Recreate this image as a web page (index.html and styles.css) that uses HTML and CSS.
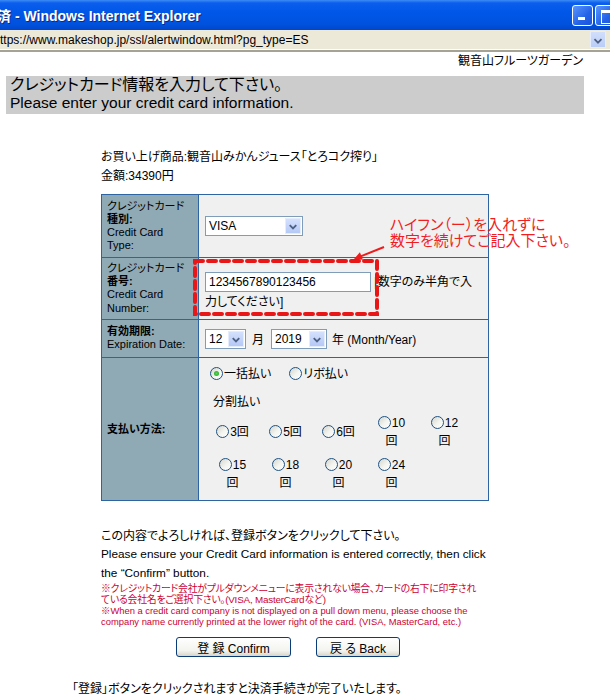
FILE: index.html
```html
<!DOCTYPE html>
<html lang="ja">
<head>
<meta charset="utf-8">
<title>決済 - Windows Internet Explorer</title>
<link rel="stylesheet" href="styles.css">
</head>
<body>
<div class="titlebar">
  <span class="title">決済 - Windows Internet Explorer</span>
  <div class="winbtns">
    <span class="wbtn wbtn-min"></span>
    <span class="wbtn wbtn-max"></span>
  </div>
</div>
<div class="addr">
  <span class="url">ttps://www.makeshop.jp/ssl/alertwindow.html?pg_type=ES</span>
  <span class="addr-drop"><svg width="16" height="17" viewBox="0 0 16 17"><path d="M4 7 L8 11 L12 7" fill="none" stroke="#4d6185" stroke-width="2"/></svg></span>
</div>

<div class="page">
  <div class="shop">観音山フルーツガーデン</div>
  <div class="banner">
    <div class="banner-ja">クレジットカード情報を入力して下さい。</div>
    <div class="banner-en">Please enter your credit card information.</div>
  </div>

  <div class="content">
    <p class="info">お買い上げ商品:観音山みかんジュース「とろコク搾り」</p>
    <p class="info">金額:34390円</p>

    <div class="form-wrap">
      <div class="cc">
        <div class="lbl">
          <span class="lbl-ja">クレジットカード</span>
          <span class="lbl-ja lbl-b">種別:</span>
          <span class="lbl-en">Credit Card</span>
          <span class="lbl-en">Type:</span>
        </div>
        <div class="val val-mid">
          <span class="select sel-type"><span class="sel-val">VISA</span><span class="sel-btn"><svg width="15" height="16" viewBox="0 0 15 16"><path d="M4 6 L7.5 9.5 L11 6" fill="none" stroke="#4d6185" stroke-width="2"/></svg></span></span>
        </div>

        <div class="lbl">
          <span class="lbl-ja">クレジットカード</span>
          <span class="lbl-ja lbl-b">番号:</span>
          <span class="lbl-en">Credit Card</span>
          <span class="lbl-en">Number:</span>
        </div>
        <div class="val val-card">
          <span class="textbox">1234567890123456</span> [数字のみ半角で入力してください]
        </div>

        <div class="lbl">
          <span class="lbl-ja lbl-b">有効期限:</span>
          <span class="lbl-en">Expiration Date:</span>
        </div>
        <div class="val val-mid">
          <span class="select sel-month"><span class="sel-val">12</span><span class="sel-btn"><svg width="15" height="16" viewBox="0 0 15 16"><path d="M4 6 L7.5 9.5 L11 6" fill="none" stroke="#4d6185" stroke-width="2"/></svg></span></span>
          <span class="unit">月</span>
          <span class="select sel-year"><span class="sel-val">2019</span><span class="sel-btn"><svg width="15" height="16" viewBox="0 0 15 16"><path d="M4 6 L7.5 9.5 L11 6" fill="none" stroke="#4d6185" stroke-width="2"/></svg></span></span>
          <span class="unit unit-year">年 (Month/Year)</span>
        </div>

        <div class="lbl">
          <span class="lbl-ja lbl-b">支払い方法:</span>
        </div>
        <div class="val val-pay">
          <div class="pay-top">
            <span class="opt"><span class="radio on"></span>一括払い</span>
            <span class="opt"><span class="radio"></span>リボ払い</span>
          </div>
          <div class="pay-split">分割払い</div>
          <div class="split-grid">
            <span class="cell"><span class="radio"></span>3回</span>
            <span class="cell"><span class="radio"></span>5回</span>
            <span class="cell"><span class="radio"></span>6回</span>
            <span class="cell"><span class="radio"></span>10回</span>
            <span class="cell"><span class="radio"></span>12回</span>
            <span class="cell"><span class="radio"></span>15回</span>
            <span class="cell"><span class="radio"></span>18回</span>
            <span class="cell"><span class="radio"></span>20回</span>
            <span class="cell"><span class="radio"></span>24回</span>
          </div>
        </div>
      </div>

      <!-- hint callout over the card number field -->
      <div class="hint">ハイフン（ー）を入れずに<br>数字を続けてご記入下さい。</div>
      <svg class="hint-arrow" width="34" height="16" viewBox="0 0 34 16">
        <line x1="31" y1="2" x2="7" y2="11.6" stroke="#ee1c1c" stroke-width="2"/>
        <polygon points="1,14 6.9,7.3 9.9,14.7" fill="#ee1c1c"/>
      </svg>
      <svg class="hint-box" width="186" height="57" viewBox="0 0 186 57">
        <rect x="2" y="2" width="182" height="53" fill="none" stroke="#e81616" stroke-width="4" stroke-dasharray="8 5" stroke-linecap="round"/>
      </svg>
    </div>

    <p class="confirm-ja">この内容でよろしければ、登録ボタンをクリックして下さい。</p>
    <p class="confirm-en">Please ensure your Credit Card information is entered correctly, then click the “Confirm” button.</p>
    <p class="note-ja">※クレジットカード会社がプルダウンメニューに表示されない場合、カードの右下に印字されている会社名をご選択下さい。(VISA, MasterCardなど)</p>
    <p class="note-en">※When a credit card company is not displayed on a pull down menu, please choose the company name currently printed at the lower right of the card. (VISA, MasterCard, etc.)</p>

    <div class="actions">
      <span class="btn btn-ok">登 録 Confirm</span>
      <span class="btn btn-back">戻 る Back</span>
    </div>
  </div>

  <p class="finish">「登録」ボタンをクリックされますと決済手続きが完了いたします。</p>
</div>
</body>
</html>
```

FILE: styles.css
```css
* { box-sizing: border-box; }

body {
  margin: 0;
  width: 610px;
  height: 700px;
  overflow: hidden;
  background: #fff;
  color: #000;
  font-family: "Liberation Sans", "Noto Sans CJK JP", sans-serif;
  font-size: 12px;
  font-feature-settings: "palt" 1;
}

p { margin: 0; }

/* window chrome */
.titlebar {
  height: 30px;
  display: flex;
  align-items: center;
  justify-content: space-between;
  overflow: hidden;
  background: linear-gradient(#3d8cf5 0, #0b5ded 3px, #0058e8 40%, #0052de 80%, #0046cc 100%);
}
.title {
  margin-left: -17px;
  color: #fff;
  font-weight: bold;
  font-size: 14px;
  white-space: nowrap;
  text-shadow: 1px 1px 0 #0a2a8c;
}
.winbtns {
  display: flex;
  gap: 2px;
  margin-right: -6px;
}
.wbtn {
  position: relative;
  width: 21px;
  height: 21px;
  border: 1px solid #fff;
  border-radius: 3px;
  background: linear-gradient(135deg, #5a95fb, #2463e8 60%, #1b54dc);
}
.wbtn-min::after {
  content: "";
  position: absolute;
  left: 5px;
  bottom: 5px;
  width: 7px;
  height: 3px;
  background: #fff;
}
.wbtn-max::after {
  content: "";
  position: absolute;
  left: 5px;
  top: 4px;
  width: 10px;
  height: 10px;
  border: 1px solid #fff;
  border-top-width: 3px;
}

.addr {
  height: 22px;
  display: flex;
  align-items: center;
  justify-content: space-between;
  background: #ece9d8;
  border-bottom: 2px solid #a5a296;
  box-shadow: inset 0 -1px 0 #fff;
  padding-right: 4px;
}
.url {
  font-size: 12px;
  white-space: nowrap;
  line-height: 20px;
}
.addr-drop {
  width: 16px;
  height: 17px;
  display: flex;
  background: linear-gradient(#d2defc, #b9cdf7);
  border: 1px solid #e6eefe;
  margin-top: -1px;
}

/* page */
.page { width: 590px; }

.shop {
  text-align: right;
  padding-right: 7px;
  margin-top: 2px;
  line-height: 14px;
}

.banner {
  margin: 8px 6px 0;
  background: #cccccc;
  padding: 0 4px 2px;
}
.banner-ja { font-size: 16px; line-height: 18px; }
.banner-en { font-size: 15.5px; line-height: 18px; }

.content {
  margin-left: 101px;
  width: 388px;
}
.info { line-height: 19px; }
.info:first-child { margin-top: 34px; }

.form-wrap {
  position: relative;
  margin-top: 8px;
}

/* card form grid: the blue background shows through the 1px gaps as rules */
.cc {
  display: grid;
  grid-template-columns: 96px 1fr;
  grid-template-rows: 62px 61px 37px 142px;
  gap: 1px;
  padding: 1px;
  background: #2f64a2;
}
.lbl {
  background: #8fa9b5;
  padding-left: 5px;
  display: flex;
  flex-direction: column;
  justify-content: center;
}
.lbl-ja { font-size: 11px; line-height: 13px; white-space: nowrap; }
.lbl-b { font-weight: bold; }
.lbl-en { font-size: 11px; line-height: 13.5px; }

.val {
  background: #f0f0f0;
  padding: 0 6px;
}
.val-mid {
  display: flex;
  align-items: center;
}

.select {
  display: inline-flex;
  align-items: center;
  height: 20px;
  border: 1px solid #7f9db9;
  background: #fff;
  padding: 1px;
}
.sel-val { flex: 1; padding-left: 2px; line-height: 16px; }
.sel-btn {
  width: 16px;
  height: 16px;
  display: flex;
  background: linear-gradient(#d4e0fd, #b5c9f6);
  border: 1px solid #e4ecfd;
}
.sel-type { width: 98px; }
.sel-month { width: 41px; }
.sel-year { width: 56px; }
.unit { margin-left: 6px; margin-right: 7px; }
.unit-year { margin-left: 5px; }

.val-card {
  padding-top: 14px;
  line-height: 17px;
}
.textbox {
  display: inline-block;
  vertical-align: middle;
  width: 166px;
  height: 20px;
  line-height: 18px;
  border: 1px solid #7f9db9;
  background: #fff;
  padding-left: 3px;
  margin-bottom: 2px;
}

.val-pay { padding: 8px 0 0 11px; }
.pay-top { display: flex; gap: 18px; line-height: 16px; }
.opt { white-space: nowrap; }
.pay-split { margin: 12px 0 0 3px; line-height: 16px; }

/* instalment choices: narrow cells so the longer counts wrap their 回 */
.split-grid {
  display: grid;
  grid-template-columns: repeat(5, 53px);
  grid-auto-rows: 36px;
  row-gap: 6px;
  align-items: center;
  margin: 4px 0 0 -4px;
}
.cell {
  display: block;
  text-align: center;
  padding: 0 8px;
  line-height: 18px;
}

.radio {
  display: inline-block;
  position: relative;
  width: 13px;
  height: 13px;
  border-radius: 50%;
  border: 1px solid #1d5283;
  background: linear-gradient(135deg, #d6d6ce, #f4f4f0 55%, #fff);
  vertical-align: -2px;
  margin-right: 1px;
}
.radio.on::after {
  content: "";
  position: absolute;
  left: 3px;
  top: 3px;
  width: 5px;
  height: 5px;
  border-radius: 50%;
  background: radial-gradient(circle, #55d655, #21a121);
}

/* callout */
.hint {
  position: absolute;
  left: 289px;
  top: 22px;
  width: 200px;
  color: #f01e1e;
  font-family: "Noto Sans CJK JP", sans-serif;
  font-size: 15px;
  line-height: 16px;
  white-space: nowrap;
}
.hint-arrow {
  position: absolute;
  left: 252px;
  top: 51px;
}
.hint-box {
  position: absolute;
  left: 92px;
  top: 65px;
}

.confirm-ja { margin-top: 26px; line-height: 18px; }
.confirm-en { font-size: 11.8px; line-height: 19px; }
.note-ja, .note-en {
  color: #cc0033;
  line-height: 11px;
}
.note-ja { font-size: 9.85px; letter-spacing: -0.2px; padding-right: 6px; }
.note-en { font-size: 9.4px; }

.actions {
  display: flex;
  gap: 25px;
  margin-top: 10px;
  padding-left: 75px;
}
.btn {
  height: 20px;
  display: flex;
  align-items: center;
  justify-content: center;
  border: 1px solid #0a3c78;
  border-radius: 3px;
  background: linear-gradient(#ffffff, #f3f3ef 70%, #d8d5c8);
  font-size: 12px;
}
.btn-ok { width: 115px; }
.btn-back { width: 84px; }

.finish {
  margin: 23px 0 0 72px;
  line-height: 18px;
}
```
